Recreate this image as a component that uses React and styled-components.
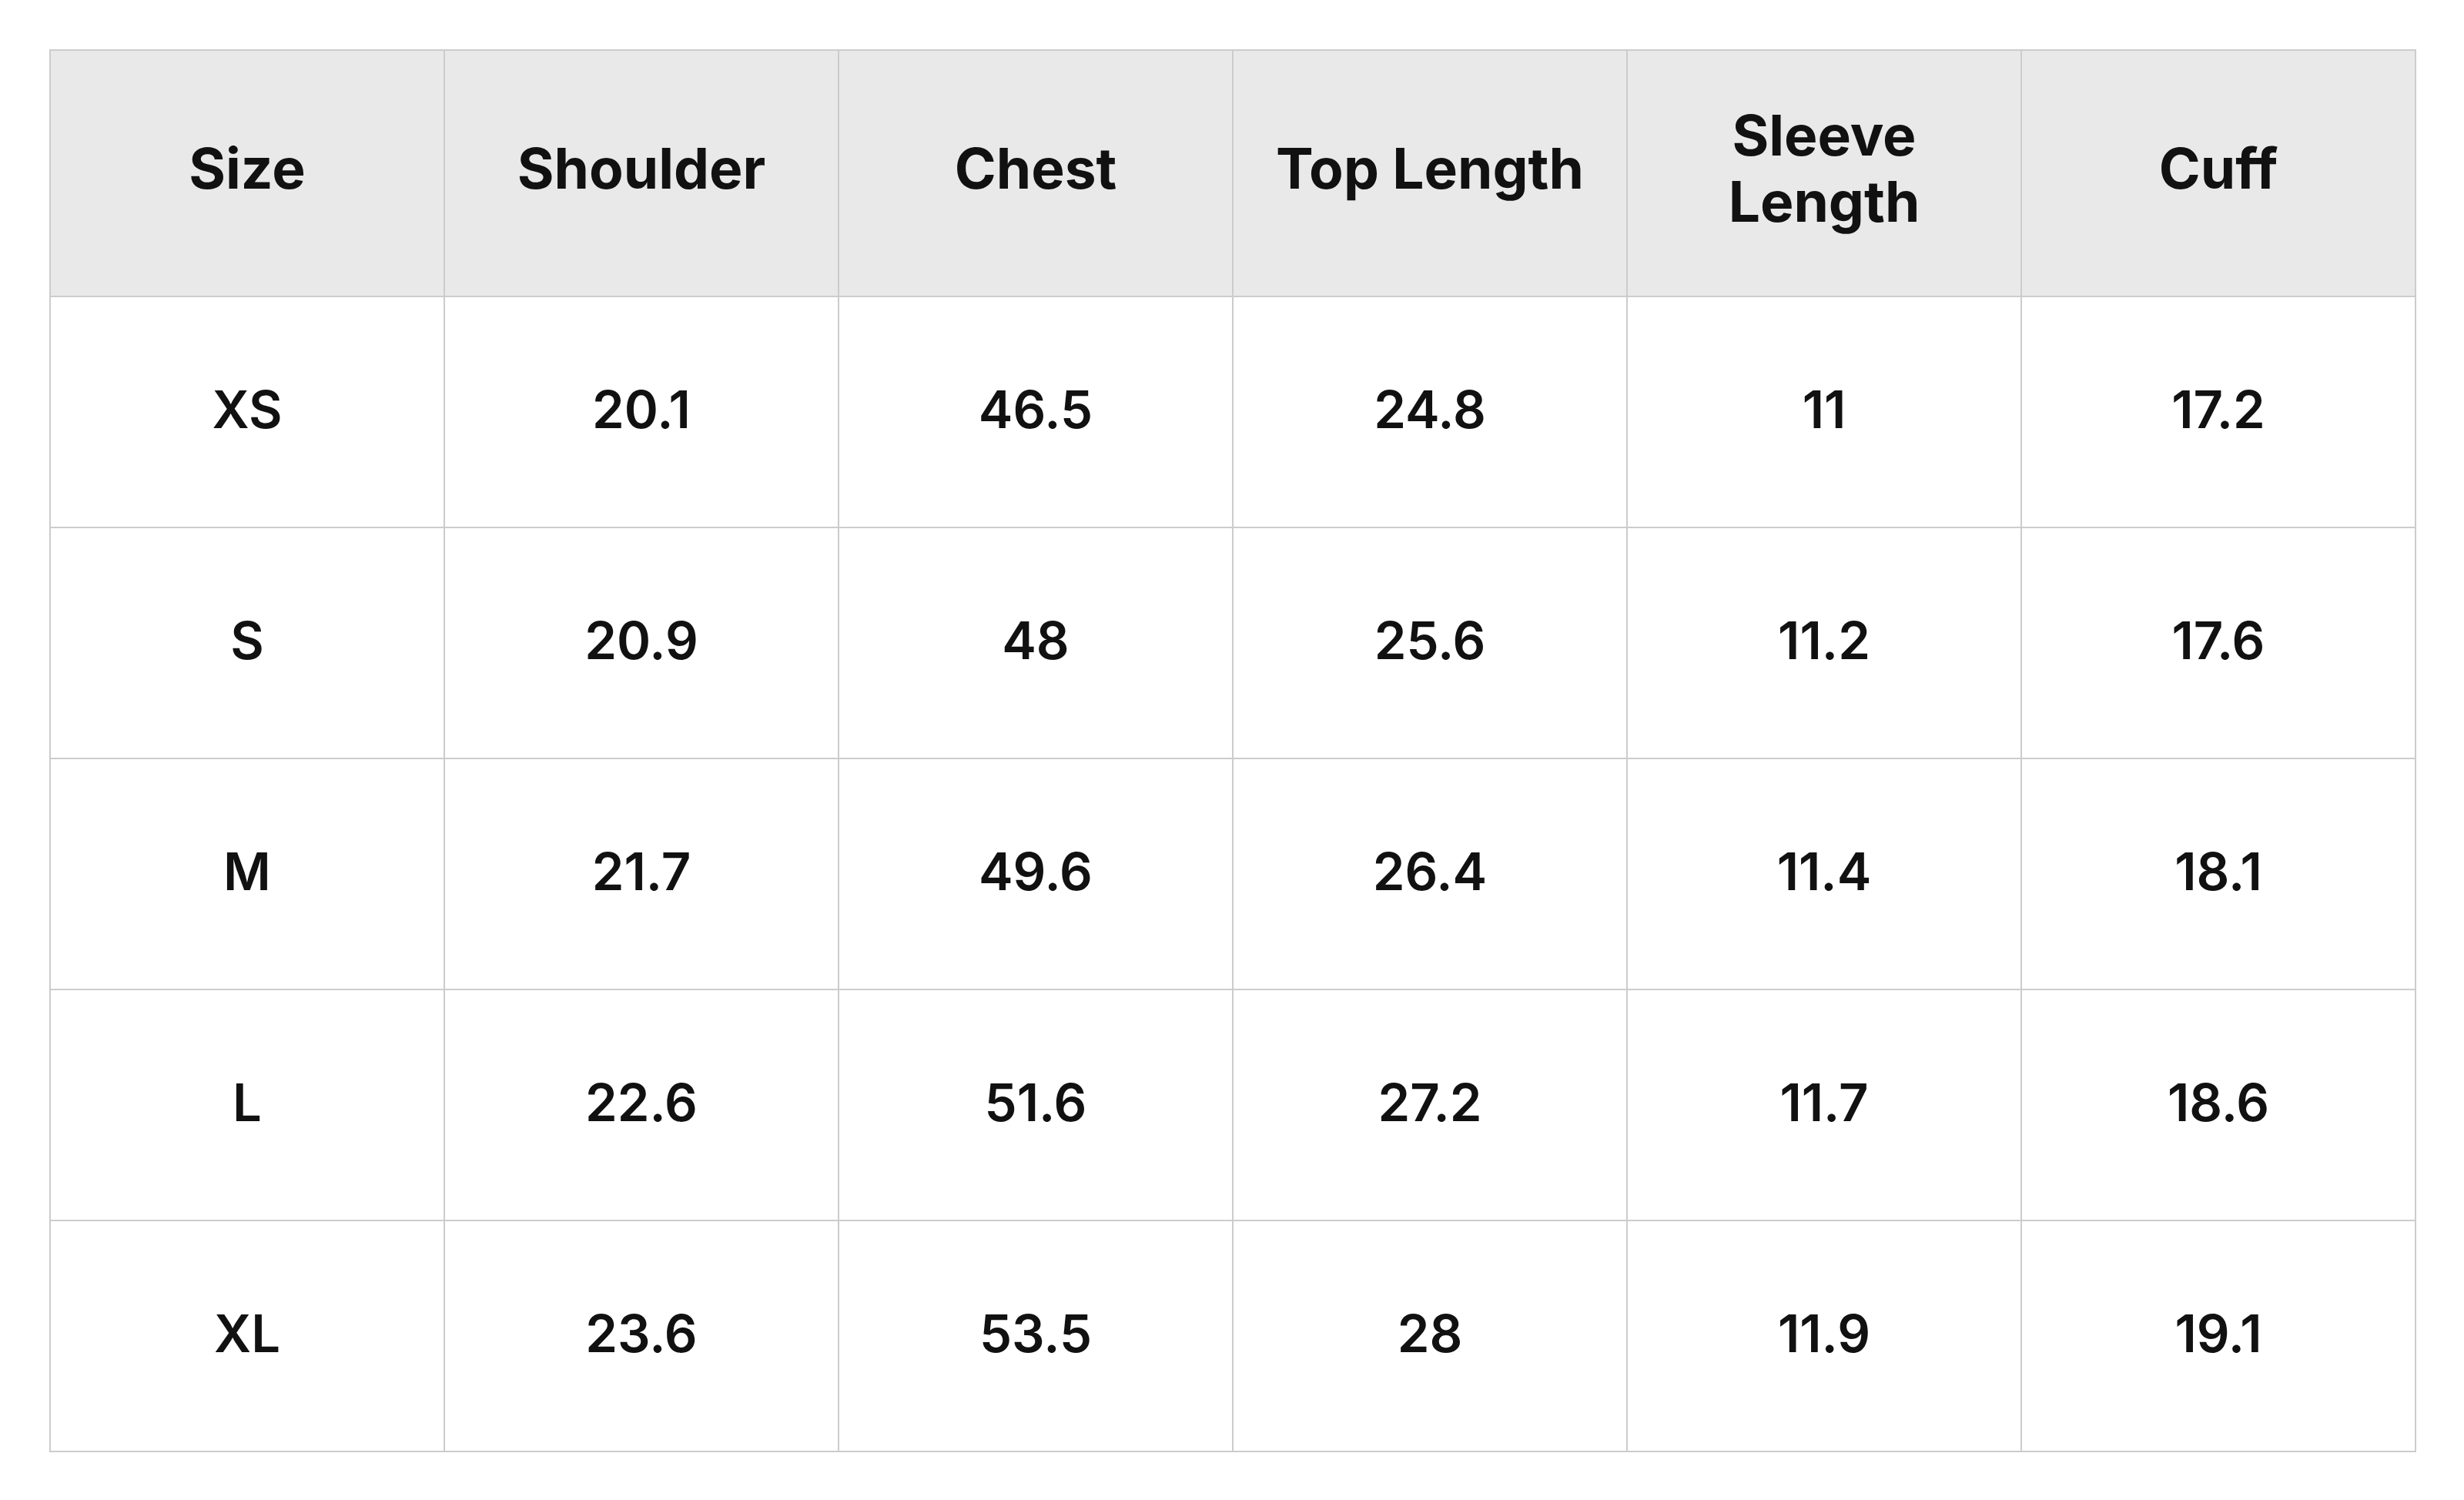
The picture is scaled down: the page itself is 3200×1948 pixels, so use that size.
import styled, { createGlobalStyle } from "styled-components";

const GlobalStyle = createGlobalStyle`
  html, body {
    margin: 0;
    padding: 0;
    background: #ffffff;
  }
  body {
    font-family: Inter, "Noto Sans", "Liberation Sans", sans-serif;
    color: #111111;
  }
`;

const columns = ["Size", "Shoulder", "Chest", "Top Length", "Sleeve Length", "Cuff"];

const rows = [
  ["XS", "20.1", "46.5", "24.8", "11", "17.2"],
  ["S", "20.9", "48", "25.6", "11.2", "17.6"],
  ["M", "21.7", "49.6", "26.4", "11.4", "18.1"],
  ["L", "22.6", "51.6", "27.2", "11.7", "18.6"],
  ["XL", "23.6", "53.5", "28", "11.9", "19.1"],
];

function App() {
  return (
    <Page>
      <GlobalStyle />
      <SizeTable>
        <colgroup>
          {columns.map((c) => (
            <col key={c} />
          ))}
        </colgroup>
        <thead>
          <tr>
            {columns.map((c) => (
              <HeadCell key={c}>{c}</HeadCell>
            ))}
          </tr>
        </thead>
        <tbody>
          {rows.map((r) => (
            <tr key={r[0]}>
              {r.map((v, i) => (
                <Cell key={i}>{v}</Cell>
              ))}
            </tr>
          ))}
        </tbody>
      </SizeTable>
    </Page>
  );
}

const Page = styled.div`
  padding: 64px;
`;

const SizeTable = styled.table`
  width: 3072px;
  table-layout: fixed;
  border-collapse: collapse;
  border: 2px solid #cccccc;

  col {
    width: 512px;
  }
`;

const HeadCell = styled.th`
  box-sizing: border-box;
  height: 320px;
  padding: 0 40px 12px;
  background: #e9e9e9;
  border: 2px solid #cccccc;
  font-size: 73px;
  font-weight: 700;
  line-height: 86px;
  text-align: center;
  vertical-align: middle;
`;

const Cell = styled.td`
  box-sizing: border-box;
  height: 300px;
  padding: 0 44px 8px;
  border: 2px solid #cccccc;
  font-size: 67px;
  font-weight: 600;
  line-height: 85px;
  text-align: center;
  vertical-align: middle;
`;

export default App;
